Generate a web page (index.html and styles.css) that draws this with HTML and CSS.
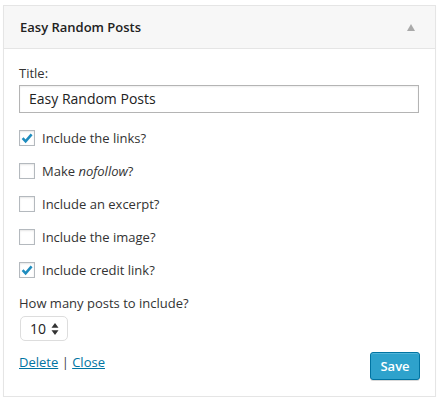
FILE: index.html
```html
<!DOCTYPE html>
<html>
<head>
<meta charset="utf-8">
<link rel="stylesheet" href="styles.css">
</head>
<body>
<div class="widget">
  <div class="widget-top">
    <h3 class="widget-title">Easy Random Posts</h3>
    <span class="toggle"></span>
  </div>
  <div class="widget-inside">
    <label class="field-label">Title:</label>
    <div class="text-input">Easy Random Posts</div>
    <div class="checks">
      <div class="check-row"><span class="cb checked"><svg viewBox="0 0 16 16" width="16" height="16"><path d="M3.6 8.2 L6.6 11.3 L12.6 4.4" fill="none" stroke="#1e8cbe" stroke-width="2.6"/></svg></span><span>Include the links?</span></div>
      <div class="check-row"><span class="cb"></span><span>Make <em>nofollow</em>?</span></div>
      <div class="check-row"><span class="cb"></span><span>Include an excerpt?</span></div>
      <div class="check-row"><span class="cb"></span><span>Include the image?</span></div>
      <div class="check-row"><span class="cb checked"><svg viewBox="0 0 16 16" width="16" height="16"><path d="M3.6 8.2 L6.6 11.3 L12.6 4.4" fill="none" stroke="#1e8cbe" stroke-width="2.6"/></svg></span><span>Include credit link?</span></div>
    </div>
    <label class="field-label count-label">How many posts to include?</label>
    <div class="select"><span>10</span><svg class="spin" viewBox="0 0 8 12" width="8" height="12"><path d="M4 0 L7.5 4.8 L0.5 4.8 Z M4 12 L7.5 7.2 L0.5 7.2 Z" fill="#333"/></svg></div>
    <div class="actions">
      <div class="links"><a href="#">Delete</a> | <a href="#">Close</a></div>
      <button class="save">Save</button>
    </div>
  </div>
</div>
</body>
</html>
```
FILE: styles.css
```css
html, body {
  margin: 0;
  padding: 0;
  background: #fff;
}
body {
  font-family: "Open Sans", "Liberation Sans", sans-serif;
  font-size: 13px;
  color: #444;
}
.widget {
  margin: 5px 0 0 3px;
  width: 431px;
  height: 390px;
  border: 1px solid #e5e5e5;
  box-sizing: content-box;
  box-shadow: 0 1px 1px rgba(0,0,0,0.04);
  display: flex;
  flex-direction: column;
}
.widget-top {
  height: 42px;
  background: #f7f7f7;
  border-bottom: 1px solid #e5e5e5;
  display: flex;
  align-items: center;
  justify-content: space-between;
  padding: 0 20px 0 16px;
}
.widget-title {
  margin: 0;
  font-size: 13px;
  font-weight: 600;
  color: #222;
}
.toggle {
  width: 0;
  height: 0;
  border-left: 4px solid transparent;
  border-right: 4px solid transparent;
  border-bottom: 7px solid #aaa;
  margin-top: 1px;
}
.widget-inside {
  padding: 15px 15px 0 15px;
  display: flex;
  flex-direction: column;
  flex: 1;
}
.field-label {
  display: block;
  line-height: 18px;
  color: #333;
}
.text-input {
  margin-top: 3px;
  width: 400px;
  height: 28px;
  box-sizing: border-box;
  border: 1px solid #b4b4b4;
  box-shadow: inset 0 1px 2px rgba(0,0,0,0.07);
  padding: 0 9px;
  line-height: 26px;
  font-size: 14px;
  color: #222;
  background: #fff;
}
.checks {
  margin-top: 17px;
  display: flex;
  flex-direction: column;
  gap: 17px;
}
.check-row {
  display: flex;
  align-items: center;
  height: 16px;
  gap: 7px;
  color: #333;
}
.cb {
  width: 16px;
  height: 16px;
  box-sizing: border-box;
  border: 1px solid #b4b9be;
  background: #fff;
  box-shadow: inset 0 1px 2px rgba(0,0,0,0.1);
  display: inline-block;
  position: relative;
  flex: none;
}
.cb svg {
  position: absolute;
  left: -1px;
  top: -1px;
}
.check-row em {
  font-style: italic;
}
.count-label {
  margin-top: 16px;
}
.select {
  margin-top: 4px;
  width: 48px;
  height: 25px;
  box-sizing: border-box;
  border: 1px solid #ddd;
  border-radius: 5px;
  display: flex;
  align-items: center;
  justify-content: space-between;
  padding: 0 8px 0 9px;
  font-size: 14px;
  color: #222;
  margin-left: 1px;
  background: #fff;
}
.actions {
  margin-top: 12px;
  display: flex;
  justify-content: space-between;
  align-items: flex-start;
  width: 401px;
}
.links {
  line-height: 18px;
  color: #444;
}
.links a {
  color: #0074a2;
  text-decoration: underline;
}
.save {
  width: 50px;
  height: 28px;
  background: #2ea2cc;
  border: 1px solid #0074a2;
  border-radius: 3px;
  box-shadow: inset 0 1px 0 rgba(120,200,230,0.5), 0 1px 0 rgba(0,0,0,0.15);
  color: #fff;
  font-family: "Open Sans", "Liberation Sans", sans-serif;
  font-size: 13px;
  font-weight: 600;
  padding: 0;
  margin-top: -1px;
}
```
